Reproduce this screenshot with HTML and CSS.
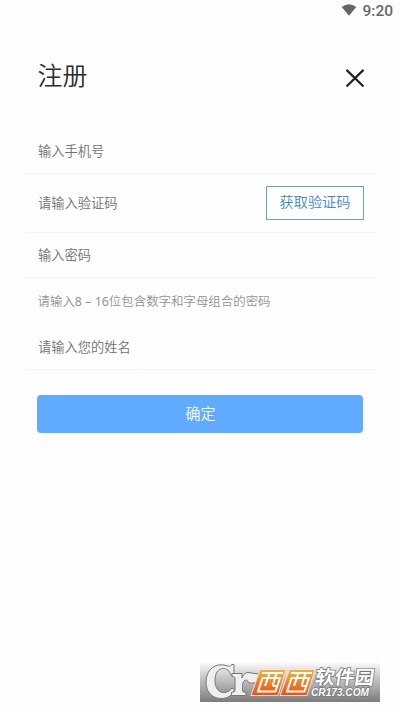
FILE: index.html
```html
<!DOCTYPE html>
<html lang="zh-CN">
<head>
<meta charset="utf-8">
<title>注册</title>
<link rel="stylesheet" href="styles.css">
</head>
<body>
<div class="status">
  <svg class="wifi" width="16" height="12" viewBox="0 0 16 12"><path d="M.7 2.900Q8-2.500 15.300 2.900L8 11.700Z"/></svg>
  <span class="time">9:20</span>
</div>
<header class="header">
  <h1 class="title">注册</h1>
  <svg class="close" width="20" height="20" viewBox="0 0 20 20"><path d="M1.500 1.900 18.500 18.500M18.500 1.900 1.500 18.500"/></svg>
</header>
<main class="form">
  <div class="row row-phone"><span>输入手机号</span></div>
  <div class="row row-code"><span>请输入验证码</span><button class="code-btn">获取验证码</button></div>
  <div class="row row-password"><span>输入密码</span></div>
  <p class="hint">请输入<span class="latin">8 – 16</span>位包含数字和字母组合的密码</p>
  <div class="row row-name"><span>请输入您的姓名</span></div>
  <button class="submit">确定</button>
</main>
<svg class="watermark" width="180" height="40" viewBox="0 0 180 40">
  <defs>
    <linearGradient id="shade" x1="0" y1="0" x2="0" y2="1"><stop offset="0" stop-color="#fefefe"/><stop offset=".3" stop-color="#d2d2d2"/><stop offset="1" stop-color="#7c7c7c"/></linearGradient>
    <linearGradient id="orange" x1="0" y1="0" x2="0" y2="1"><stop offset="0" stop-color="#f9b034"/><stop offset="1" stop-color="#e7521c"/></linearGradient>
  </defs>
  <rect width="180" height="40" fill="url(#shade)"/>
  <g class="mark">
    <path d="M34 2.500V13h-3C29.500 8.500 26.500 6.500 23.500 6.500 17.500 6.500 15 12 15 18.500 15 26 18.500 30.500 24 30.500c3.500 0 6-1.500 8-4.500l2.500 2C32.500 33.500 27.500 36.500 21 36.500 12 36.500 6 29.500 6 20 6 10 12 2.800 21.500 2.800c3.500 0 6 1.500 8 1.500 1 0 1.600-.8 2-1.800Z"/>
    <path d="M32 11.500h10v4.500C43.500 12 46 10 49 10.500c5 1 9 2 14.500 1C60 19.500 54 22.500 48.500 20.500c-1-2.500-2.500-3-4-2-1.500 1-2 3-2 6v4c0 1.500 1 1.800 3.500 1.800v3.200H31.500v-3.200c2.500 0 3.500-.8 3.500-2.500V16.500c0-1.500-.5-1.800-3-1.800Z"/>
  </g>
  <g class="tile"><path d="M60 7.500H86L78 33.500H51Z"/><path d="M89.500 7.500H115L107 33.500H80Z"/></g>
  <g class="xixi">
    <path d="M62 11H83M69.500 11 65 24M76.500 11 73 22.500Q72.500 24 75 24H77M62.500 16H80L75.500 29.500H58Z"/>
    <path d="M91 11H112M98.500 11 94 24M105.500 11 102 22.500Q101.500 24 104 24H106M91.500 16H109L104.500 29.500H87Z"/>
  </g>
  <text class="site-cn" x="117.500" y="22.500" textLength="59" lengthAdjust="spacingAndGlyphs" transform="skewX(-8)">软件园</text>
  <text class="site-en" x="111" y="33.500" textLength="58" lengthAdjust="spacingAndGlyphs">CR173.COM</text>
</svg>
</body>
</html>
```
FILE: styles.css
```css
* { box-sizing: border-box; }
body {
  margin: 0;
  height: 712px;
  position: relative;
  overflow: hidden;
  background: #fefefe;
  font-family: "Noto Sans", "Noto Sans CJK SC", sans-serif;
  font-weight: 350;
  color: #2c2c2c;
}
.status {
  height: 22px;
  padding-right: 7px;
  display: flex;
  align-items: center;
  justify-content: flex-end;
  gap: 5px;
}
.wifi { fill: #666; margin-top: -2px; }
.time { font: 500 15.500px/22px Roboto, sans-serif; color: #686868; }
.header {
  height: 106px;
  padding: 34px 35px 0 37.500px;
  display: flex;
  justify-content: space-between;
  align-items: flex-start;
}
.title { margin: 0; font-size: 25px; line-height: 38px; font-weight: 350; }
.close { margin-top: 12px; fill: none; stroke: #252525; stroke-width: 2.300; }
.form { padding: 0 24px 0 25px; }
.row {
  display: flex;
  align-items: center;
  justify-content: space-between;
  padding: 0 13px;
  border-bottom: 1px solid #f5f5f5;
  font-size: 13.250px;
  line-height: 20px;
  color: #707070;
}
.row-phone { height: 46px; }
.row-code { height: 59px; }
.row-password { height: 45px; }
.row-name { height: 45px; }
.code-btn {
  width: 98px;
  height: 34px;
  margin-right: -1px;
  padding: 0 0 4px;
  border: 1px solid #679fd9;
  background: transparent;
  font: 350 14.200px/20px "Noto Sans CJK SC", sans-serif;
  color: #4588ca;
  white-space: nowrap;
}
.hint {
  margin: 0;
  height: 47px;
  padding: 0 12.500px;
  font-size: 12.450px;
  line-height: 47px;
  color: #929292;
  white-space: nowrap;
}
.latin { font-weight: 400; }
.submit {
  display: block;
  width: 326px;
  height: 38px;
  margin: 25px 0 0 12.400px;
  padding: 0 0 3px;
  border: 0;
  border-radius: 4px;
  background: #60aaff;
  font: 350 15px/20px "Noto Sans CJK SC", sans-serif;
  color: #fff;
}
.watermark { position: absolute; left: 200px; top: 662px; }
.mark { fill: #efefef; stroke: #777; stroke-width: 1; }
.tile { fill: url(#orange); stroke: #f5e6d4; stroke-width: 1; }
.xixi { fill: none; stroke: #fff; stroke-width: 2; }
.site-cn {
  font: 700 19px "Noto Sans CJK SC", sans-serif;
  fill: #fff;
  stroke: #777;
  stroke-width: 1.500;
  paint-order: stroke;
}
.site-en {
  font: italic 700 10px "Liberation Sans", sans-serif;
  fill: #fff;
  stroke: #777;
  stroke-width: 1.500;
  paint-order: stroke;
}
```
